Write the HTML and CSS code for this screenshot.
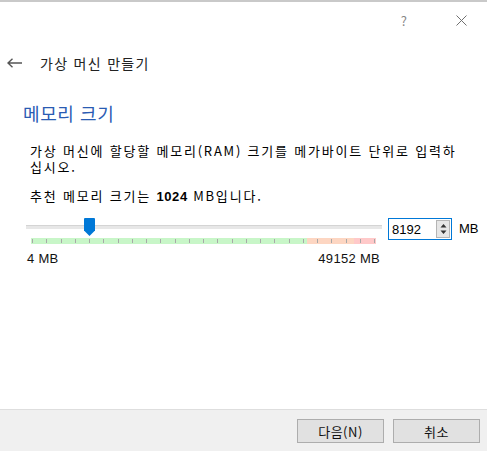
FILE: index.html
```html
<!DOCTYPE html>
<html lang="ko">
<head>
<meta charset="utf-8">
<title>가상 머신 만들기</title>
<link rel="stylesheet" href="styles.css">
</head>
<body>
<div class="window">
  <div class="titlebar">
    <span class="help">?</span>
    <svg class="close" width="11" height="11" viewBox="0 0 11 11"><path d="M0.5 0.5 L10.5 10.5 M10.5 0.5 L0.5 10.5" stroke="#707070" stroke-width="1" fill="none"/></svg>
  </div>
  <div class="header">
    <svg class="back" width="16" height="10" viewBox="0 0 16 10"><path d="M1 5 H15 M5.5 0.8 L1 5 L5.5 9.2" stroke="#555" stroke-width="1.4" fill="none"/></svg>
    <span class="wizard-title">가상 머신 만들기</span>
  </div>
  <main class="content">
    <h1 class="page-title">메모리 크기</h1>
    <p class="desc">가상 머신에 할당할 메모리(RAM) 크기를 메가바이트 단위로 입력하십시오.</p>
    <p class="desc rec">추천 메모리 크기는 <b>1024</b> MB입니다.</p>
    <div class="mem-row">
      <div class="slider">
        <div class="track">
          <div class="groove"></div>
          <div class="handle"></div>
        </div>
        <div class="ticks">
          <span></span><span></span><span></span><span></span><span></span>
          <span></span><span></span><span></span><span></span><span></span>
          <span></span><span></span><span></span><span></span><span></span>
          <span></span><span></span><span></span><span></span><span></span>
          <span></span><span></span><span></span><span></span><span></span>
        </div>
        <div class="range-labels"><span>4 MB</span><span>49152 MB</span></div>
      </div>
      <div class="spinbox">
        <span class="spin-value">8192</span>
        <span class="spin-btn">
          <svg width="7" height="12" viewBox="0 0 7 12"><path d="M3.5 1 L6.5 4.5 H0.5 Z M3.5 11 L6.5 7.5 H0.5 Z" fill="#333"/></svg>
        </span>
      </div>
      <span class="unit">MB</span>
    </div>
  </main>
  <footer class="footer">
    <button class="btn">다음(N)</button>
    <button class="btn">취소</button>
  </footer>
</div>
</body>
</html>
```
FILE: styles.css
```css
* { box-sizing: border-box; }
html, body { margin: 0; padding: 0; }
body {
  width: 487px;
  height: 451px;
  background: #fff;
  font-family: "Liberation Sans", "Noto Sans CJK KR", sans-serif;
  color: #000;
  overflow: hidden;
}
.window {
  height: 451px;
  display: flex;
  flex-direction: column;
  border-top: 2px solid #c9c9c9;
}
.titlebar {
  height: 34px;
  display: flex;
  align-items: center;
  justify-content: flex-end;
  gap: 49px;
  padding-right: 20px;
  padding-top: 2px;
}
.help {
  font-family: "Noto Sans CJK KR", sans-serif;
  font-size: 13px;
  color: #888;
}
.header {
  height: 56px;
  display: flex;
  align-items: center;
  padding-left: 7px;
  padding-bottom: 2px;
}
.back { margin-right: 17px; }
.wizard-title {
  font-family: "Noto Sans CJK KR", sans-serif;
  font-size: 14px;
  letter-spacing: 1.3px;
  color: #222;
}
.content {
  flex: 1;
  padding-left: 23px;
}
.page-title {
  margin: 8px 0 0 0;
  font-family: "Noto Sans CJK KR", sans-serif;
  font-weight: normal;
  font-size: 18px;
  line-height: 26px;
  letter-spacing: 0.6px;
  color: #2a5bb3;
}
.desc {
  margin: 17px 0 0 7px;
  width: 440px;
  font-size: 13px;
  line-height: 16px;
  letter-spacing: 1.8px;
  font-family: "Noto Sans CJK KR", sans-serif;
}
.desc.rec { margin-top: 13px; }
.desc b { font-family: "Liberation Sans", sans-serif; font-weight: bold; letter-spacing: 0.6px; }
.mem-row {
  margin-top: 13px;
  margin-left: 3px;
  display: flex;
  align-items: flex-start;
}
.slider { width: 356px; }
.track {
  position: relative;
  height: 18px;
  display: flex;
  align-items: center;
}
.groove {
  width: 100%;
  height: 4px;
  background: #e7e7e7;
  border-top: 1px solid #d4d4d4;
}
.handle {
  position: absolute;
  left: 58px;
  top: 0;
  width: 11px;
  height: 18px;
  background: #0078d7;
  border-radius: 1px 1px 0 0;
  clip-path: polygon(0 0, 100% 0, 100% 70%, 50% 100%, 0 70%);
}
.ticks {
  margin: 2px 6px 0 5px;
  height: 6px;
  display: flex;
  justify-content: space-between;
  align-items: center;
  padding: 0 1px;
  background: linear-gradient(to right, #c8f6c8 0, #c8f6c8 80%, #fdd6c2 80%, #fdd6c2 93.5%, #ffc9c9 93.5%);
}
.ticks span {
  width: 1px;
  height: 4px;
  background: #a8a8a8;
}
.range-labels {
  margin-top: 8px;
  display: flex;
  justify-content: space-between;
  padding: 0 2px 0 1px;
  font-size: 13px;
  letter-spacing: 0.3px;
  line-height: 14px;
  color: #111;
}
.spinbox {
  margin-left: 6px;
  width: 64px;
  height: 22px;
  border: 1px solid #0078d7;
  display: flex;
  align-items: center;
  justify-content: space-between;
  padding-left: 3px;
  padding-right: 1px;
  font-size: 13px;
}
.spin-btn {
  width: 14px;
  height: 18px;
  background: #e6e6e6;
  border: 1px solid #b5b5b5;
  display: flex;
  align-items: center;
  justify-content: center;
}
.unit {
  margin-left: 7px;
  font-size: 13px;
  line-height: 22px;
}
.footer {
  height: 42px;
  background: #f0f0f0;
  border-top: 1px solid #dedede;
  display: flex;
  justify-content: flex-end;
  align-items: flex-start;
  gap: 9px;
  padding: 9px 7px 0 0;
}
.btn {
  width: 87px;
  height: 24px;
  background: #e1e1e1;
  border: 1px solid #adadad;
  font-family: "Noto Sans CJK KR", sans-serif;
  font-size: 13px;
  letter-spacing: 0.5px;
  color: #111;
  padding: 0;
}
```
